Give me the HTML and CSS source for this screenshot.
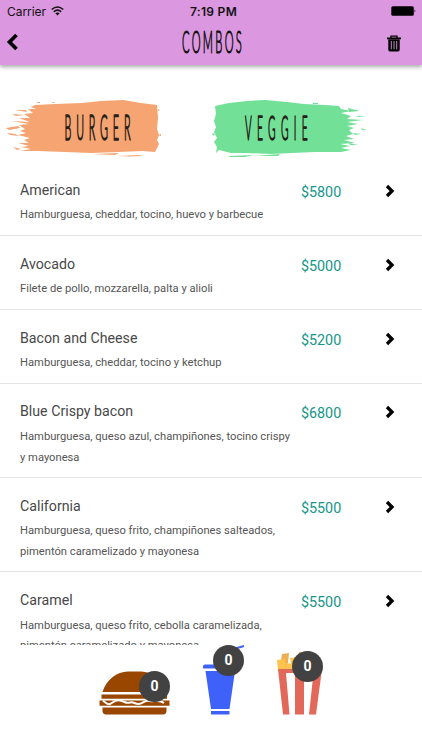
FILE: index.html
```html
<!DOCTYPE html>
<html lang="es">
<head>
<meta charset="utf-8">
<meta name="viewport" content="width=device-width, initial-scale=1">
<title>Combos</title>
<link rel="stylesheet" href="styles.css">
</head>
<body>
<svg width="0" height="0" class="defs">
  <symbol id="chevron" viewBox="0 0 10 14"><path d="M2 2L7 7L2 12" fill="none" stroke="#000" stroke-width="3.3"/></symbol>
</svg>
<div class="app">
  <header class="header">
    <div class="status">
      <div class="carrier"><span>Carrier</span>
        <svg width="13" height="10" viewBox="0 0 13 10"><g fill="none" stroke="#111" stroke-width="1.6"><path d="M.7 3.5Q6.5-1.5 12.3 3.5"/><path d="M2.8 5.8Q6.5 2.6 10.2 5.8"/></g><path d="M4.4 7.3Q6.5 5.7 8.6 7.3L6.5 9.5Z"/></svg>
      </div>
      <span class="time">7:19 PM</span>
      <svg class="battery" width="26" height="10" viewBox="0 0 26 10"><rect x=".3" y=".3" width="22.5" height="9.4" rx="1.5"/><path d="M23.6 3.2Q25.3 5 23.6 6.8Z"/></svg>
    </div>
    <div class="nav">
      <svg class="back" width="12" height="18" viewBox="0 0 12 18"><path d="M10.5 2L3.5 9L10.5 16" fill="none" stroke="#000" stroke-width="3.7"/></svg>
      <svg class="title" width="70" height="40" viewBox="0 0 70 40"><text class="hand" transform="translate(5 31) scale(.36 1)" font-size="31" textLength="166">COMBOS</text></svg>
      <svg class="trash" width="14" height="17" viewBox="0 0 14 17"><path d="M4 3V1.2H10V3" fill="none" stroke="#000" stroke-width="1.3"/><path d="M0 2.5H14V4.2H0ZM1.3 4.5H12.7V14.5Q12.7 16.5 11 16.5H3Q1.3 16.5 1.3 14.5Z"/><path d="M4.3 6V14.3M7 6V14.3M9.7 6V14.3" stroke="#db97df" stroke-width=".9"/></svg>
    </div>
  </header>
  <nav class="tabs">
    <svg class="tab" width="211" height="75" viewBox="0 0 211 75">
      <g fill="#f5a472" transform="translate(0 1)"><path d="M31 11L35 9L55 8L82 7L101 5L123 4L141 7L157 9L158 22L157 33L159 39L157 44L159 48L156 54L155 56L143 55L118 56L91 57L65 56L38 55L20 55L31 53L21 51L29 50L18 47L29 47L24 44L30 42L18 39L26 37L20 35L25 33L19 29L29 28L11 25L30 26L19 22L30 22L24 18L33 17L28 13L36 13Z"/>
      <path d="M12 18L25 19L16 20ZM6 32L18 30L20 32L9 34ZM7 37L15 38L19 40L10 39ZM15 14L26 14L27 16ZM13 51L21 53L17 54ZM92 58L119 57L115 59ZM118 60L139 59L143 60L129 60.5ZM37 6H40V7H37ZM158 39L161 38V40ZM158 13L160 14L158 15ZM50 7L55 6V7Z"/></g>
      <text class="hand" transform="translate(64.5 45) scale(.3 1)" font-size="36" textLength="220">BURGER</text>
    </svg>
    <svg class="tab" width="211" height="75" viewBox="0 0 211 75">
      <g fill="#72e097" transform="translate(0 1)"><path d="M4 10L18 7L36 5L54 4L76 6L93 8L114 9L128 10L130 13L140 15L130 17L140 20L136 23L152 24L136 26L147 28L136 30L143 32L138 34L142 38L135 40L143 43L133 44L144 47L129 48L139 50L130 52L140 54L130 56L104 56L81 57L60 58L35 57L20 57L8 54L5 57L6 51L3 46L6 42L3 36L5 31L3 25L5 18Z"/>
      <path d="M137 12L149 15L138 16ZM144 20L155 20L148 21ZM150 32L155 34L151 34ZM142 37L150 38L144 39ZM18 60L43 59L34 61L18 61ZM42 60L69 58L67 60ZM138 47L147 49L139 49ZM102 7H107V8H102ZM1 37L4 38L2 40Z"/></g>
      <text class="hand" transform="translate(34 45) scale(.3 1)" font-size="34" textLength="209">VEGGIE</text>
    </svg>
  </nav>
  <main class="list">
    <article class="row"><div class="info"><h2>American</h2><p>Hamburguesa, cheddar, tocino, huevo y barbecue</p></div><span class="price">$5800</span><svg class="chev"><use href="#chevron"/></svg></article>
    <article class="row"><div class="info"><h2>Avocado</h2><p>Filete de pollo, mozzarella, palta y alioli</p></div><span class="price">$5000</span><svg class="chev"><use href="#chevron"/></svg></article>
    <article class="row"><div class="info"><h2>Bacon and Cheese</h2><p>Hamburguesa, cheddar, tocino y ketchup</p></div><span class="price">$5200</span><svg class="chev"><use href="#chevron"/></svg></article>
    <article class="row"><div class="info"><h2>Blue Crispy bacon</h2><p>Hamburguesa, queso azul, champiñones, tocino crispy<br>y mayonesa</p></div><span class="price">$6800</span><svg class="chev"><use href="#chevron"/></svg></article>
    <article class="row"><div class="info"><h2>California</h2><p>Hamburguesa, queso frito, champiñones salteados,<br>pimentón caramelizado y mayonesa</p></div><span class="price">$5500</span><svg class="chev"><use href="#chevron"/></svg></article>
    <article class="row"><div class="info"><h2>Caramel</h2><p>Hamburguesa, queso frito, cebolla caramelizada,<br>pimentón caramelizado y mayonesa</p></div><span class="price">$5500</span><svg class="chev"><use href="#chevron"/></svg></article>
  </main>
  <footer class="cart">
    <div class="item burger">
      <svg width="71" height="70" viewBox="0 0 71 70"><g fill="#984600"><path d="M3.5 47C7 35 18 26.5 29 26.5H42C53 26.5 64 35 67.5 47ZM2.5 49.5H68V53.8H2.5ZM.5 55.5H70.5V60.8H.5ZM3.5 62.5H67.5V66.5Q67 69.5 64 69.5H7Q4 69.5 3.5 66.5Z"/></g><path d="M4 55.5C7 58 8 60 11 59C15 57 16 54.5 21 55.5C26 56.5 27 59 31 57.5C34 56 36 59.5 40 59C45 58 46 54.5 51 56C55 57 60 54 65 58" fill="none" stroke="#fff" stroke-width="2"/></svg>
      <span class="badge">0</span>
    </div>
    <div class="item drink">
      <svg width="42" height="70" viewBox="0 0 42 70"><path d="M25 7L31 4L41 1" stroke="#3e61fa" stroke-width="2" fill="none"/><g fill="#3e61fa"><path d="M2 19.5H31L35 23.5H0V21.5Q0 19.5 2 19.5ZM2.5 26H32L26.5 64H8ZM8 66H26.5V69.5H8Z"/></g></svg>
      <span class="badge">0</span>
    </div>
    <div class="item fries">
      <svg width="46" height="70" viewBox="0 0 46 70"><path d="M5 9L12 8L11 18L9 19V26H4V15ZM31 7H22V26H31Z" fill="#edae54"/><g fill="#ffc34e"><path d="M0 15L8 14L9 26H1ZM9 18L16 19L15 26H9ZM13 13L20 12V26H15Z"/></g><g fill="#e26959"><path d="M1 24H45L39 69.5H32L36.5 28H27V69.5H18V28H9L12.5 69.5H6Z"/></g></svg>
      <span class="badge">0</span>
    </div>
  </footer>
</div>
</body>
</html>
```
FILE: styles.css
```css
* { box-sizing: border-box; }
body { margin: 0; background: #fff; font-family: Roboto, sans-serif; }
svg { display: block; flex: none; }
.defs { position: absolute; }
.app { width: 422px; height: 750px; display: flex; flex-direction: column; overflow: hidden; }
.header { height: 65px; flex: none; background: #db97df; box-shadow: 0 2px 4px rgba(0,0,0,.34); }
.status { height: 22px; display: grid; grid-template-columns: 1fr auto 1fr; align-items: center; padding: 0 5px 0 7px; font-family: Inter, sans-serif; font-size: 12px; color: #111; }
.carrier { display: flex; align-items: center; gap: 5px; letter-spacing: -.05px; }
.time { font-weight: 600; letter-spacing: .3px; padding-left: 3px; }
.battery { justify-self: end; }
.nav { height: 43px; display: grid; grid-template-columns: 1fr 70px 1fr; align-items: center; padding: 0 21px 3px 6px; }
.title { margin-left: 8px; overflow: visible; }
.trash { justify-self: end; margin-top: 2px; }
.hand { font-family: Lato, sans-serif; font-weight: 300; fill: #111; stroke: #111; stroke-width: .8px; stroke-linejoin: round; vector-effect: non-scaling-stroke; }
.tabs { height: 97px; flex: none; display: flex; padding-top: 30px; }
.tabs .hand { fill: #262019; stroke: #262019; stroke-width: 1px; }
.list { height: 483px; flex: none; overflow: hidden; }
.row { display: flex; align-items: flex-start; padding: 17.8px 27px 8.9px 20px; border-bottom: 1px solid #e4e4e4; }
.info { width: 281px; }
h2 { margin: 0 0 5.7px; font-size: 14.2px; line-height: 20px; font-weight: 400; color: #484848; }
p { margin: 0; font-size: 11.2px; line-height: 20.5px; color: #555; white-space: nowrap; }
.price { font-size: 14.3px; line-height: 20px; margin-top: 2px; color: #159688; }
.chev { width: 10px; height: 14px; margin: 4px 0 0 auto; }
.cart { height: 105px; display: flex; padding-left: 99px; }
.item { position: relative; height: 70px; }
.burger { width: 71px; }
.drink { width: 42px; margin-left: 33px; }
.fries { width: 46px; margin-left: 32px; }
.badge { position: absolute; width: 31px; height: 31px; border-radius: 50%; background: #424242; color: #fff; font-size: 14px; line-height: 30px; font-weight: 700; text-align: center; }
.burger .badge { left: 40px; top: 26px; }
.drink .badge { left: 10px; top: 0; }
.fries .badge { left: 15px; top: 6px; }
```
